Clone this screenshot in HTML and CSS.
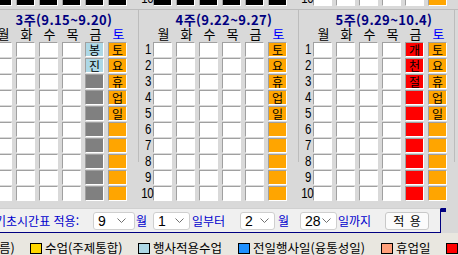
FILE: index.html
```html
<!DOCTYPE html>
<html lang="ko">
<head>
<meta charset="utf-8">
<link rel="stylesheet" href="styles.css">
</head>
<body>
<div class="weeks">
  <div class="strip">
    <div class="spanel">
      <div class="row"><span class="num">10</span><span class="c blk"></span><span class="c blk"></span><span class="c blk"></span><span class="c blk"></span><span class="c blk"></span><span class="c blk"></span></div>
    </div>
    <div class="spanel">
      <div class="row"><span class="num">10</span><span class="c blk"></span><span class="c blk"></span><span class="c blk"></span><span class="c blk"></span><span class="c blk"></span><span class="c blk"></span></div>
    </div>
    <div class="spanel">
      <div class="row"><span class="num">10</span><span class="c"></span><span class="c"></span><span class="c"></span><span class="c"></span><span class="c"></span><span class="c org"></span></div>
    </div>
  </div>
  <div class="panels">
    <div class="panel">
      <div class="title">3주(9.15~9.20)</div>
      <div class="head"><span>월</span><span>화</span><span>수</span><span>목</span><span>금</span><span class="sat">토</span></div>
      <div class="row"><span class="num">1</span><span class="c"></span><span class="c"></span><span class="c"></span><span class="c"></span><span class="c lb">봉</span><span class="c org">토</span></div>
      <div class="row"><span class="num">2</span><span class="c"></span><span class="c"></span><span class="c"></span><span class="c"></span><span class="c lb">진</span><span class="c org">요</span></div>
      <div class="row"><span class="num">3</span><span class="c"></span><span class="c"></span><span class="c"></span><span class="c"></span><span class="c gry"></span><span class="c org">휴</span></div>
      <div class="row"><span class="num">4</span><span class="c"></span><span class="c"></span><span class="c"></span><span class="c"></span><span class="c gry"></span><span class="c org">업</span></div>
      <div class="row"><span class="num">5</span><span class="c"></span><span class="c"></span><span class="c"></span><span class="c"></span><span class="c gry"></span><span class="c org">일</span></div>
      <div class="row"><span class="num">6</span><span class="c"></span><span class="c"></span><span class="c"></span><span class="c"></span><span class="c gry"></span><span class="c org"></span></div>
      <div class="row"><span class="num">7</span><span class="c"></span><span class="c"></span><span class="c"></span><span class="c"></span><span class="c gry"></span><span class="c org"></span></div>
      <div class="row"><span class="num">8</span><span class="c"></span><span class="c"></span><span class="c"></span><span class="c"></span><span class="c gry"></span><span class="c org"></span></div>
      <div class="row"><span class="num">9</span><span class="c"></span><span class="c"></span><span class="c"></span><span class="c"></span><span class="c gry"></span><span class="c org"></span></div>
      <div class="row"><span class="num">10</span><span class="c"></span><span class="c"></span><span class="c"></span><span class="c"></span><span class="c gry"></span><span class="c org"></span></div>
    </div>
    <div class="panel">
      <div class="title">4주(9.22~9.27)</div>
      <div class="head"><span>월</span><span>화</span><span>수</span><span>목</span><span>금</span><span class="sat">토</span></div>
      <div class="row"><span class="num">1</span><span class="c"></span><span class="c"></span><span class="c"></span><span class="c"></span><span class="c"></span><span class="c org">토</span></div>
      <div class="row"><span class="num">2</span><span class="c"></span><span class="c"></span><span class="c"></span><span class="c"></span><span class="c"></span><span class="c org">요</span></div>
      <div class="row"><span class="num">3</span><span class="c"></span><span class="c"></span><span class="c"></span><span class="c"></span><span class="c"></span><span class="c org">휴</span></div>
      <div class="row"><span class="num">4</span><span class="c"></span><span class="c"></span><span class="c"></span><span class="c"></span><span class="c"></span><span class="c org">업</span></div>
      <div class="row"><span class="num">5</span><span class="c"></span><span class="c"></span><span class="c"></span><span class="c"></span><span class="c"></span><span class="c org">일</span></div>
      <div class="row"><span class="num">6</span><span class="c"></span><span class="c"></span><span class="c"></span><span class="c"></span><span class="c"></span><span class="c org"></span></div>
      <div class="row"><span class="num">7</span><span class="c"></span><span class="c"></span><span class="c"></span><span class="c"></span><span class="c"></span><span class="c org"></span></div>
      <div class="row"><span class="num">8</span><span class="c"></span><span class="c"></span><span class="c"></span><span class="c"></span><span class="c"></span><span class="c org"></span></div>
      <div class="row"><span class="num">9</span><span class="c"></span><span class="c"></span><span class="c"></span><span class="c"></span><span class="c"></span><span class="c org"></span></div>
      <div class="row"><span class="num">10</span><span class="c"></span><span class="c"></span><span class="c"></span><span class="c"></span><span class="c"></span><span class="c org"></span></div>
    </div>
    <div class="panel panel-last">
      <div class="title">5주(9.29~10.4)</div>
      <div class="head"><span>월</span><span>화</span><span>수</span><span>목</span><span>금</span><span class="sat">토</span></div>
      <div class="row"><span class="num">1</span><span class="c"></span><span class="c"></span><span class="c"></span><span class="c"></span><span class="c red">개</span><span class="c org">토</span></div>
      <div class="row"><span class="num">2</span><span class="c"></span><span class="c"></span><span class="c"></span><span class="c"></span><span class="c red">천</span><span class="c org">요</span></div>
      <div class="row"><span class="num">3</span><span class="c"></span><span class="c"></span><span class="c"></span><span class="c"></span><span class="c red">절</span><span class="c org">휴</span></div>
      <div class="row"><span class="num">4</span><span class="c"></span><span class="c"></span><span class="c"></span><span class="c"></span><span class="c red"></span><span class="c org">업</span></div>
      <div class="row"><span class="num">5</span><span class="c"></span><span class="c"></span><span class="c"></span><span class="c"></span><span class="c red"></span><span class="c org">일</span></div>
      <div class="row"><span class="num">6</span><span class="c"></span><span class="c"></span><span class="c"></span><span class="c"></span><span class="c red"></span><span class="c org"></span></div>
      <div class="row"><span class="num">7</span><span class="c"></span><span class="c"></span><span class="c"></span><span class="c"></span><span class="c red"></span><span class="c org"></span></div>
      <div class="row"><span class="num">8</span><span class="c"></span><span class="c"></span><span class="c"></span><span class="c"></span><span class="c red"></span><span class="c org"></span></div>
      <div class="row"><span class="num">9</span><span class="c"></span><span class="c"></span><span class="c"></span><span class="c"></span><span class="c red"></span><span class="c org"></span></div>
      <div class="row"><span class="num">10</span><span class="c"></span><span class="c"></span><span class="c"></span><span class="c"></span><span class="c red"></span><span class="c org"></span></div>
    </div>
  </div>
</div>

<div class="bar">
  <span class="lbl lbl-first">기초시간표 적용:</span>
  <div class="sel sel-a"><span class="val">9</span><svg class="chev" viewBox="0 0 9 5" width="9" height="5"><path d="M0.5 0.5 L4.5 4.5 L8.5 0.5" fill="none" stroke="#707070" stroke-width="1"/></svg></div>
  <span class="lbl lbl-m1">월</span>
  <div class="sel sel-b"><span class="val">1</span><svg class="chev" viewBox="0 0 9 5" width="9" height="5"><path d="M0.5 0.5 L4.5 4.5 L8.5 0.5" fill="none" stroke="#707070" stroke-width="1"/></svg></div>
  <span class="lbl lbl-t1">일부터</span>
  <div class="sel sel-c"><span class="val">2</span><svg class="chev" viewBox="0 0 9 5" width="9" height="5"><path d="M0.5 0.5 L4.5 4.5 L8.5 0.5" fill="none" stroke="#707070" stroke-width="1"/></svg></div>
  <span class="lbl lbl-m2">월</span>
  <div class="sel sel-d"><span class="val">28</span><svg class="chev" viewBox="0 0 9 5" width="9" height="5"><path d="M0.5 0.5 L4.5 4.5 L8.5 0.5" fill="none" stroke="#707070" stroke-width="1"/></svg></div>
  <span class="lbl lbl-t2">일까지</span>
  <button class="btn">적 용</button>
</div>

<div class="legend">
  <span class="ltxt lead">름)</span>
  <span class="item item-1"><span class="sq sq-gold"></span><span class="ltxt">수업(주제통합)</span></span>
  <span class="item item-2"><span class="sq sq-lb"></span><span class="ltxt">행사적용수업</span></span>
  <span class="item item-3"><span class="sq sq-db"></span><span class="ltxt">전일행사일(융통성일)</span></span>
  <span class="item item-4"><span class="sq sq-sal"></span><span class="ltxt">휴업일</span></span>
  <span class="item"><span class="sq sq-red"></span></span>
</div>
</body>
</html>
```

FILE: styles.css
```css
html, body {
  margin: 0;
  padding: 0;
}
body {
  width: 458px;
  height: 255px;
  overflow: hidden;
  background: #d9d9d9;
  font-family: "Noto Sans CJK KR", "Noto Sans", sans-serif;
  color: #000;
}

.weeks {
  margin-left: -22px;
  width: 480px;
}

.strip {
  display: flex;
  height: 9px;
  overflow: hidden;
  border-bottom: 1px solid #bcbcbc;
}
.spanel {
  width: 160px;
  box-sizing: border-box;
  padding-left: 1px;
}
.spanel .row {
  margin-top: -9px;
}

.panels {
  display: flex;
}
.panel {
  position: relative;
  width: 160px;
  box-sizing: border-box;
  padding: 2px 0 6px 1px;
}
/* divider lines between the week panels (only along the upper part) */
.panel::before {
  content: "";
  position: absolute;
  left: 0;
  top: 0;
  width: 1px;
  height: 152px;
  background: #bcbcbc;
}
.panel-last::after {
  content: "";
  position: absolute;
  right: 3px;
  top: 0;
  width: 1px;
  height: 152px;
  background: #bcbcbc;
}

.title {
  margin-left: 18px;
  width: 134px;
  height: 15px;
  line-height: 15px;
  text-align: center;
  font-size: 13px;
  font-weight: bold;
  letter-spacing: 0.4px;
  color: #000080;
  white-space: nowrap;
}

.head {
  display: flex;
  gap: 4px;
  margin-left: 15px;
  height: 13px;
  line-height: 13px;
  margin-bottom: 2px;
  font-size: 13px;
}
.head span {
  width: 19px;
  text-align: center;
}
.head .sat {
  color: #0000ff;
}

.row {
  display: flex;
  gap: 4px;
  height: 15px;
  margin-bottom: 1px;
}
.num {
  width: 14px;
  margin-right: -4px;
  box-sizing: border-box;
  padding-right: 2px;
  text-align: right;
  font-family: "Liberation Sans", sans-serif;
  font-size: 14px;
  letter-spacing: -0.4px;
  line-height: 15px;
  transform: scaleX(0.82);
  transform-origin: 12px 50%;
  white-space: nowrap;
}
.c {
  width: 19px;
  height: 15px;
  box-sizing: border-box;
  background: #fff;
  border-top: 1px solid #a0a0a0;
  border-left: 1px solid #a0a0a0;
  border-right: 1px solid #fff;
  border-bottom: 1px solid #fff;
  font-size: 12px;
  line-height: 13px;
  text-align: center;
}
.c.org { background: #ffa500; }
.c.gry { background: #808080; }
.c.lb { background: #add8e6; }
.c.red { background: #ff0000; }
.c.blk { background: #000; }

/* apply bar */
.bar {
  position: relative;
  display: flex;
  align-items: center;
  margin-left: -22px;
  width: 463px;
  height: 25px;
  box-sizing: border-box;
  background: #f0f0f0;
  border-top: 1px solid #d0d0d0;
  border-right: 1px solid #000080;
  border-bottom: 1px solid #000080;
  padding-left: 17px;
}
.bar::after {
  content: "";
  position: absolute;
  right: -6px;
  top: -1px;
  width: 5px;
  height: 4px;
  background: #000080;
}
.lbl {
  font-size: 12px;
  color: #0000cd;
  white-space: nowrap;
}
.lbl-first { width: 98px; }
.lbl-m1 { width: 12px; margin-left: 1px; margin-right: 5px; }
.lbl-t1 { width: 36px; margin-left: 2px; margin-right: 12px; }
.lbl-m2 { width: 12px; margin-left: 3px; margin-right: 10px; }
.lbl-t2 { width: 36px; margin-left: 1px; margin-right: 11px; }

.sel {
  display: flex;
  align-items: center;
  height: 18px;
  box-sizing: border-box;
  background: #fff;
  border: 1px solid #cfcfcf;
  border-radius: 3px;
  padding: 0 5px 0 4px;
}
.sel .val {
  font-family: "Liberation Sans", sans-serif;
  font-size: 14px;
  line-height: 16px;
}
.sel .chev {
  margin-left: auto;
}
.sel-a { width: 42px; padding-right: 8px; }
.sel-b { width: 37px; }
.sel-c { width: 35px; }
.sel-d { width: 37px; }

.btn {
  width: 44px;
  height: 18px;
  padding: 0;
  background: #fbfbfb;
  border: 1px solid #c8c8c8;
  border-radius: 3px;
  font-family: "Noto Sans CJK KR", sans-serif;
  font-size: 12px;
  line-height: 16px;
  color: #000;
  word-spacing: 2px;
}

/* legend */
.legend {
  display: flex;
  align-items: center;
  height: 23px;
  box-sizing: border-box;
  padding-top: 7px;
  background: #e9e7e0;
  white-space: nowrap;
}
.ltxt {
  font-size: 12.5px;
  line-height: 14px;
}
.lead {
  width: 30px;
  margin-left: -1px;
  margin-right: 1px;
}
.item {
  display: flex;
  align-items: center;
  gap: 3px;
}
.item-1 { width: 108px; }
.item-2 { width: 100px; }
.item-3 { width: 143px; }
.item-4 { width: 65px; }
.sq {
  width: 12px;
  height: 11px;
  flex: none;
  box-sizing: border-box;
  border: 1px solid #000;
}
.sq-gold { background: #ffd700; }
.sq-lb { background: #add8e6; }
.sq-db { background: #1e90ff; }
.sq-sal { background: #ffa07a; }
.sq-red { background: #ff0000; }
```
